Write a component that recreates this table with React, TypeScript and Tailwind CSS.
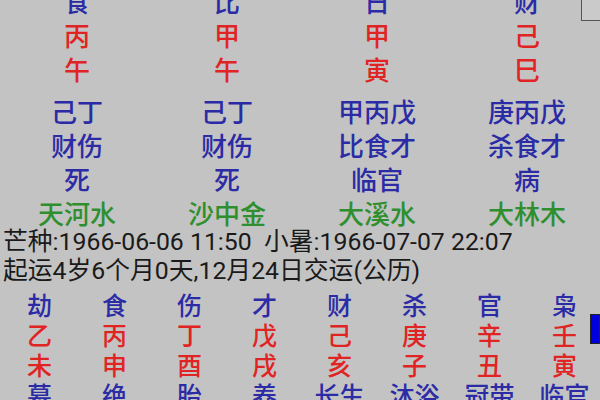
const blue = 'text-[#2b2ba6]';
const red = 'text-[#e02424]';
const green = 'text-[#2f8f2f]';

const topRows: { cells: string[]; color: string }[] = [
  { cells: ['食', '比', '日', '财'], color: blue },
  { cells: ['丙', '甲', '甲', '己'], color: red },
  { cells: ['午', '午', '寅', '巳'], color: red },
];

const hiddenRows: { cells: string[]; color: string }[] = [
  { cells: ['己丁', '己丁', '甲丙戊', '庚丙戊'], color: blue },
  { cells: ['财伤', '财伤', '比食才', '杀食才'], color: blue },
  { cells: ['死', '死', '临官', '病'], color: blue },
  { cells: ['天河水', '沙中金', '大溪水', '大林木'], color: green },
];

const luckRows: { cells: string[]; color: string }[] = [
  { cells: ['劫', '食', '伤', '才', '财', '杀', '官', '枭'], color: blue },
  { cells: ['乙', '丙', '丁', '戊', '己', '庚', '辛', '壬'], color: red },
  { cells: ['未', '申', '酉', '戌', '亥', '子', '丑', '寅'], color: red },
  { cells: ['墓', '绝', '胎', '养', '长生', '沐浴', '冠带', '临官'], color: blue },
];

function Row({ cells, color, cols }: { cells: string[]; color: string; cols: 4 | 8 }) {
  return (
    <div
      className={`ml-[2px] grid w-[600px] ${cols === 4 ? 'grid-cols-4 h-[34px]' : 'grid-cols-8 h-[30px]'} items-center text-center ${color}`}
    >
      {cells.map((c, i) => (
        <span key={i}>{c}</span>
      ))}
    </div>
  );
}

export default function App() {
  return (
    <div
      className="relative h-[400px] w-[600px] overflow-hidden bg-[#c3c3c3] text-[26px] leading-none font-medium"
      style={{ fontFamily: '"Roboto", "Noto Sans CJK SC", sans-serif' }}
    >
      <div className="-mt-[14px]">
        {topRows.map((r, i) => (
          <Row key={i} cells={r.cells} color={r.color} cols={4} />
        ))}
        <div className="mt-[8px]">
          {hiddenRows.map((r, i) => (
            <Row key={i} cells={r.cells} color={r.color} cols={4} />
          ))}
        </div>
      </div>

      <div className="-mt-[4px] pl-[3px] text-[24.8px] font-normal text-[#1a1a1a]">
        <div className="flex h-[29px] items-center whitespace-pre">芒种:1966-06-06 11:50  小暑:1966-07-07 22:07</div>
        <div className="flex h-[29px] items-center whitespace-pre">起运4岁6个月0天,12月24日交运(公历)</div>
      </div>

      <div className="mt-[5px] text-[25px]">
        {luckRows.map((r, i) => (
          <Row key={i} cells={r.cells} color={r.color} cols={8} />
        ))}
      </div>

      <div className="absolute right-0 top-0 h-[21px] w-[19px] border-b border-l border-[#555] bg-[#cacaca]" />
      <div className="absolute right-0 top-[314px] h-[30px] w-[10px] border border-[#222] bg-[#0000dd]" />
    </div>
  );
}
